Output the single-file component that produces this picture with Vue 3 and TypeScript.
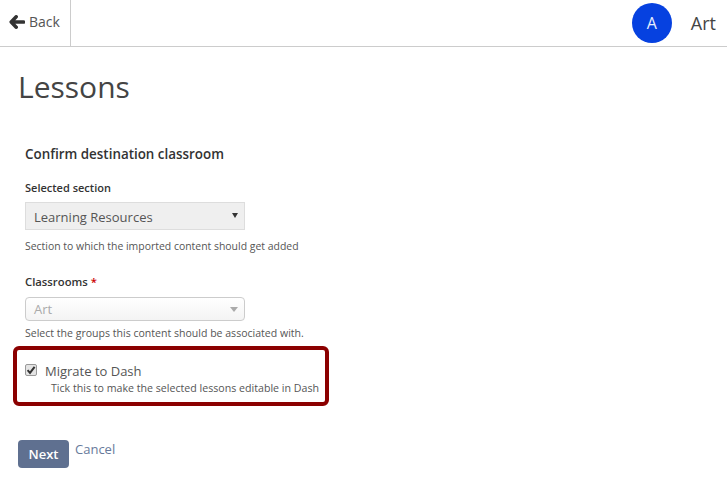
<script setup lang="ts">
const userName = 'Art';
const selectedSection = 'Learning Resources';
</script>

<template>
  <div class="page">
    <header class="topbar">
      <a class="back">
        <svg class="back-icon" viewBox="0 0 16 14" width="16" height="14">
          <path d="M7.2 1.8 L2.2 7 L7.2 12.2 M2.8 7 H14.6" fill="none" stroke="#333" stroke-width="3.5" stroke-linecap="round" stroke-linejoin="round" />
        </svg>
        Back
      </a>
      <div class="user">
        <span class="avatar">A</span>
        <span class="user-name">{{ userName }}</span>
      </div>
    </header>

    <main class="content">
      <h1>Lessons</h1>
      <form class="form" @submit.prevent>
        <h2>Confirm destination classroom</h2>

        <label class="label">Selected section</label>
        <div class="select">
          <span class="select-text">{{ selectedSection }}</span>
          <span class="select-arrow"></span>
        </div>
        <p class="help">Section to which the imported content should get added</p>

        <label class="label label-classrooms">Classrooms <span class="required">*</span></label>
        <div class="combo">
          <span>Art</span>
          <span class="combo-arrow"></span>
        </div>
        <p class="help help-classrooms">Select the groups this content should be associated with.</p>

        <div class="highlight">
          <span class="check">
            <svg viewBox="0 0 12 12" width="12" height="12">
              <path d="M2.6 6.2 L5 8.9 L9.6 2.8" fill="none" stroke="#333" stroke-width="2" />
            </svg>
          </span>
          <div>
            <div class="check-label">Migrate to Dash</div>
            <div class="check-help">Tick this to make the selected lessons editable in Dash</div>
          </div>
        </div>

        <div class="actions">
          <button class="next" type="button">Next</button>
          <a class="cancel">Cancel</a>
        </div>
      </form>
    </main>
  </div>
</template>

<style scoped>
.page {
  width: 727px;
  height: 487px;
  overflow: hidden;
  background: #fff;
  font-family: "Open Sans", sans-serif;
  color: #333;
}

.topbar {
  display: flex;
  justify-content: space-between;
  height: 46px;
  border-bottom: 1px solid #ccc;
}

.back {
  display: flex;
  align-items: center;
  gap: 4px;
  width: 71px;
  padding: 0 0 3px 9px;
  box-sizing: border-box;
  border-right: 1px solid #ccc;
  font-size: 14px;
  color: #555;
}

.user {
  display: flex;
  align-items: center;
  padding-right: 11px;
}

.avatar {
  display: flex;
  align-items: center;
  justify-content: center;
  width: 40px;
  height: 40px;
  border-radius: 50%;
  background: #0641e0;
  color: #e8eefc;
  font-size: 16px;
}

.user-name {
  margin-left: 19px;
  font-size: 18px;
  color: #444;
}

.content {
  padding: 0 18px;
}

h1 {
  margin: 20px 0 0;
  font-size: 30px;
  line-height: 40px;
  font-weight: 400;
  color: #444;
}

.form {
  padding-left: 7px;
}

h2 {
  margin: 38px 0 0;
  font-size: 13.4px;
  line-height: 18px;
  font-weight: 600;
  color: #333;
}

.label {
  display: block;
  margin-top: 17px;
  font-size: 11px;
  line-height: 16px;
  font-weight: 600;
  color: #333;
}

.label-classrooms {
  margin-top: 21px;
  font-size: 11.3px;
}

.required {
  color: #c00;
}

.select {
  display: flex;
  justify-content: space-between;
  align-items: center;
  box-sizing: border-box;
  width: 220px;
  height: 28px;
  margin-top: 6px;
  padding: 0 6px 0 8px;
  background: #efefef;
  border: 1px solid #ddd;
  font-size: 13px;
  color: #555;
}

.select-text {
  padding-top: 2px;
}

.select-arrow {
  margin-top: -2px;
  border-left: 3px solid transparent;
  border-right: 3px solid transparent;
  border-top: 5px solid #333;
}

.help {
  margin: 9px 0 0;
  font-size: 10.45px;
  line-height: 14px;
  color: #555;
}

.help-classrooms {
  margin-top: 5px;
  font-size: 10.55px;
}

.combo {
  display: flex;
  justify-content: space-between;
  align-items: center;
  box-sizing: border-box;
  width: 220px;
  height: 24px;
  margin-top: 7px;
  padding: 0 6px 0 8px;
  background: linear-gradient(#fff, #f4f4f4);
  border: 1px solid #ccc;
  border-radius: 4px;
  font-size: 13px;
  color: #aaa;
}

.combo-arrow {
  border-left: 4px solid transparent;
  border-right: 4px solid transparent;
  border-top: 5px solid #aaa;
}

.highlight {
  display: flex;
  align-items: flex-start;
  box-sizing: border-box;
  width: 316px;
  height: 60px;
  margin: 6px 0 0 -12px;
  padding: 12px 8px 0;
  border: 4px solid #8b0000;
  border-radius: 6px;
}

.check {
  display: block;
  flex: none;
  box-sizing: border-box;
  width: 12px;
  height: 12px;
  margin: 2px 8px 0 0;
  background: #e4e4e4;
  border: 1px solid #999;
  border-radius: 2px;
}

.check svg {
  display: block;
  margin: -1px;
}

.check-label {
  font-size: 13px;
  line-height: 18px;
  color: #555;
}

.check-help {
  margin: 1px 0 0 6px;
  font-size: 10.63px;
  line-height: 15px;
  white-space: nowrap;
  color: #555;
}

.actions {
  display: flex;
  align-items: flex-start;
  gap: 6px;
  margin: 34px 0 0 -7px;
}

.next {
  width: 51px;
  height: 28px;
  padding: 0;
  border: none;
  border-radius: 4px;
  background: #5f7090;
  color: #fff;
  font-family: inherit;
  font-size: 13px;
  font-weight: 600;
}

.cancel {
  font-size: 13px;
  line-height: 18px;
  color: #687a9b;
}
</style>
